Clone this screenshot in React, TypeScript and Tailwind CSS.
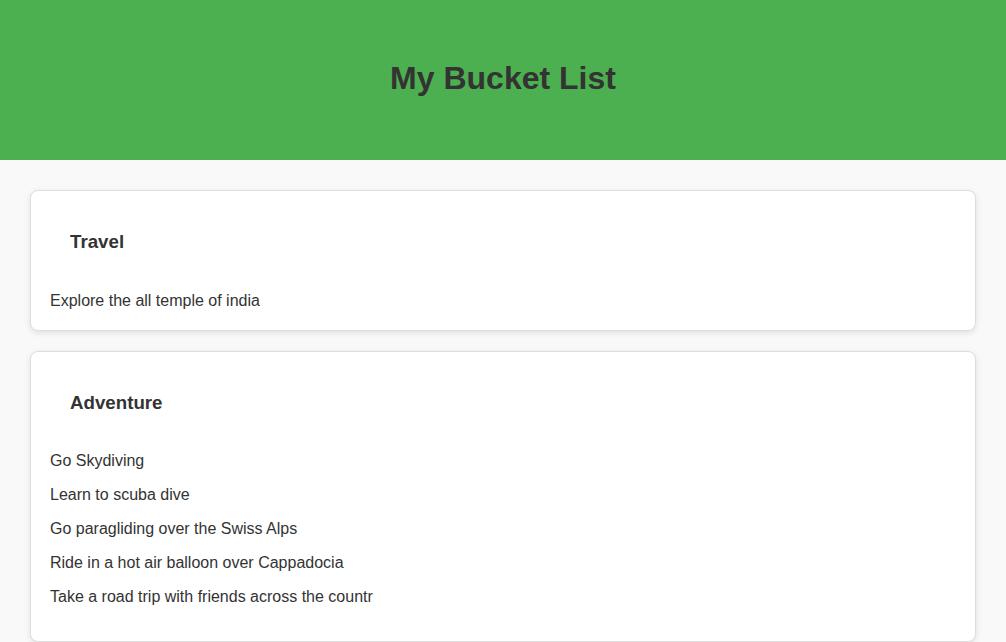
type Section = {
  title: string;
  items: string[];
  gap: string;
  bottom: string;
};

const sections: Section[] = [
  {
    title: "Travel",
    items: ["Explore the all temple of india"],
    gap: "mt-[11px]",
    bottom: "pb-[12px]",
  },
  {
    title: "Adventure",
    items: [
      "Go Skydiving",
      "Learn to scuba dive",
      "Go paragliding over the Swiss Alps",
      "Ride in a hot air balloon over Cappadocia",
      "Take a road trip with friends across the countr",
    ],
    gap: "mt-[10px]",
    bottom: "pb-[27px]",
  },
];

function Card({ section }: { section: Section }) {
  return (
    <div
      className={`bg-white border border-[#dedede] rounded-lg shadow-[0_2px_6px_rgba(0,0,0,0.1)] px-[19px] pt-[20px] ${section.bottom}`}
    >
      <h3 className="px-5 py-5 text-[18.72px] leading-[22px] font-bold text-[#333]">
        {section.title}
      </h3>
      <ul className={section.gap}>
        {section.items.map((item) => (
          <li key={item} className="py-2 text-base leading-[18px] text-[#333]">
            {item}
          </li>
        ))}
      </ul>
    </div>
  );
}

export default function App() {
  return (
    <div className="min-h-screen bg-[#f9f9f9] font-['Liberation_Sans',Arial,sans-serif]">
      {/* Header */}
      <header className="h-[160px] bg-[#4caf50] flex items-center justify-center pb-1">
        <h1 className="text-[32px] font-bold text-[#333]">My Bucket List</h1>
      </header>

      {/* Lists */}
      <main className="px-[30px] pt-[30px] pb-[30px] flex flex-col gap-5">
        {sections.map((s) => (
          <Card key={s.title} section={s} />
        ))}
      </main>
    </div>
  );
}
